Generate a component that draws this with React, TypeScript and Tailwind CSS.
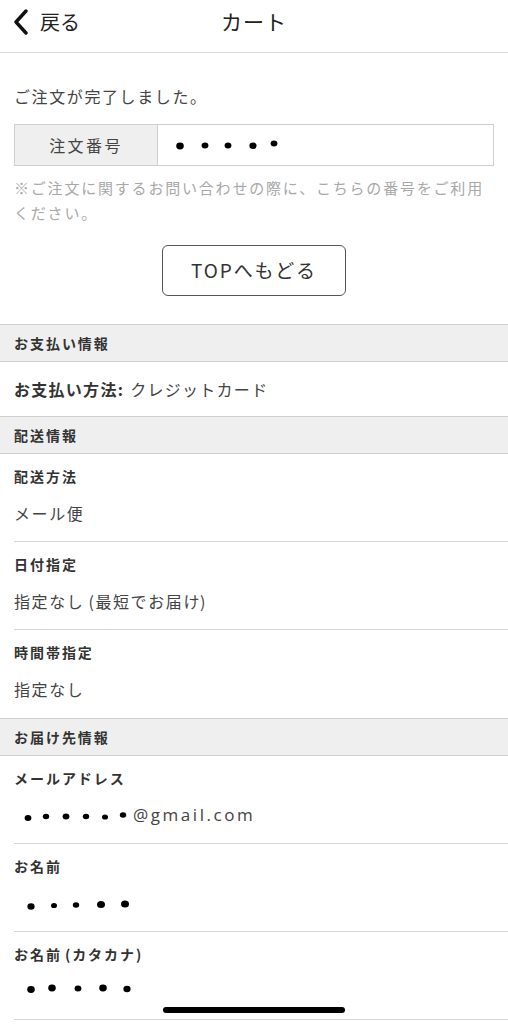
import React from 'react';

const font = { fontFamily: '"Noto Sans CJK JP", "Noto Sans", sans-serif' };

// censored dots, drawn as blobs
const Dots: React.FC<{ dots: { x: number; y: number; r: number }[]; w: number }> = ({ dots, w }) => (
  <svg width={w} height="16" viewBox={`0 0 ${w} 16`} className="block">
    {dots.map((d, i) => (
      <ellipse key={i} cx={d.x} cy={d.y} rx={d.r + 0.4} ry={d.r} fill="#000" />
    ))}
  </svg>
);

const SectionHeader: React.FC<{ title: string }> = ({ title }) => (
  <div className="h-[38px] bg-[#efefef] border-y border-[#cfcfcf] flex items-center px-[14px]">
    <span className="text-[14px] font-bold text-[#333] tracking-[0.14em]">{title}</span>
  </div>
);

const Item: React.FC<{ label: React.ReactNode; children: React.ReactNode; last?: boolean }> = ({ label, children, last }) => (
  <div className={`ml-[14px] h-[88px] flex flex-col pt-[11px] ${last ? '' : 'border-b border-[#d6d6d6]'}`}>
    <div className="text-[14px] leading-[22px] font-bold text-[#333] tracking-[0.14em]">{label}</div>
    <div className="mt-[14px] h-[24px] flex items-center text-[16px] text-[#444] tracking-[0.1em]">{children}</div>
  </div>
);

export default function App() {
  return (
    <div className="w-[508px] h-[1024px] bg-white relative overflow-hidden" style={font}>
      {/* header */}
      <div className="h-[53px] pb-[9px] border-b border-[#dcdcdc] relative flex items-center justify-center">
        <div className="absolute left-[12px] top-0 h-[44px] flex items-center gap-[10px]">
          <svg width="18" height="26" viewBox="0 0 18 26">
            <path d="M14 2 L4 13 L14 24" fill="none" stroke="#111" strokeWidth="3.4" strokeLinecap="round" strokeLinejoin="round" />
          </svg>
          <span className="text-[20px] text-[#222]">戻る</span>
        </div>
        <span className="text-[21px] text-[#222] tracking-[0.05em]">カート</span>
      </div>

      <div className="px-[14px]">
        <p className="mt-[31px] text-[16px] leading-[24px] text-[#444] tracking-[0.1em]">ご注文が完了しました。</p>

        <div className="mt-[16px] h-[42px] flex border border-[#cfcfcf]">
          <div className="w-[143px] bg-[#efefef] border-r border-[#cfcfcf] flex items-center justify-center text-[16px] text-[#444] tracking-[0.15em]">
            注文番号
          </div>
          <div className="flex-1 flex items-center pl-[17px]">
            <Dots
              w={120}
              dots={[
                { x: 5, y: 9, r: 3.4 },
                { x: 30, y: 8.5, r: 3 },
                { x: 53, y: 8.5, r: 3 },
                { x: 78, y: 8.8, r: 3.2 },
                { x: 99, y: 6.5, r: 3 },
              ]}
            />
          </div>
        </div>

        <p className="mt-[9px] text-[15px] leading-[25px] text-[#a8a8a8] tracking-[0.12em]">
          ※ご注文に関するお問い合わせの際に、こちらの番号をご利用ください。
        </p>

        <div className="mt-[20px] flex justify-center">
          <button className="w-[184px] h-[51px] border border-[#555] rounded-[6px] text-[19px] text-[#333] tracking-[0.1em]">
            TOPへもどる
          </button>
        </div>
      </div>

      <div className="mt-[28px]">
        <SectionHeader title="お支払い情報" />
        <div className="h-[54px] flex items-center px-[14px] text-[16px] text-[#444] tracking-[0.08em]">
          <span className="font-bold text-[#333]">お支払い方法:</span>
          <span className="ml-[6px]">クレジットカード</span>
        </div>

        <SectionHeader title="配送情報" />
        <Item label="配送方法">メール便</Item>
        <Item label="日付指定">
          <span>
            指定なし<span className="ml-[4px]">(</span>最短でお届け<span className="-ml-[1px]">)</span>
          </span>
        </Item>
        <Item label="時間帯指定" last>指定なし</Item>

        <SectionHeader title="お届け先情報" />
        <Item label="メールアドレス">
          <div className="flex items-center pl-[10px]">
            <Dots
              w={106}
              dots={[
                { x: 4, y: 11, r: 3 },
                { x: 22, y: 9.5, r: 2.8 },
                { x: 42, y: 9.5, r: 3 },
                { x: 62, y: 9.5, r: 2.8 },
                { x: 81, y: 10, r: 2.6 },
                { x: 99, y: 8, r: 2.8 },
              ]}
            />
            <span className="ml-[3px] text-[17px] text-[#444] tracking-[0.15em]" style={{ fontFamily: '"Open Sans", "Noto Sans", sans-serif' }}>@gmail.com</span>
          </div>
        </Item>
        <Item label="お名前">
          <div className="pl-[12px]">
            <Dots
              w={120}
              dots={[
                { x: 5, y: 11.5, r: 3.2 },
                { x: 28, y: 10.5, r: 2.6 },
                { x: 50, y: 10, r: 2.8 },
                { x: 75, y: 9.5, r: 3.6 },
                { x: 99, y: 9, r: 3.6 },
              ]}
            />
          </div>
        </Item>
        <Item label={<span>お名前<span className="ml-[3px]">(</span>カタカナ)</span>}>
          <div className="pl-[12px] -mt-[6px]">
            <Dots
              w={120}
              dots={[
                { x: 5, y: 9.5, r: 3.4 },
                { x: 26, y: 8, r: 3.4 },
                { x: 52, y: 8.5, r: 3 },
                { x: 77, y: 8, r: 3.4 },
                { x: 101, y: 9, r: 3.2 },
              ]}
            />
          </div>
        </Item>
      </div>

      {/* home indicator */}
      <div className="absolute left-[163px] top-[1007px] w-[182px] h-[6px] rounded-full bg-black" />
    </div>
  );
}
